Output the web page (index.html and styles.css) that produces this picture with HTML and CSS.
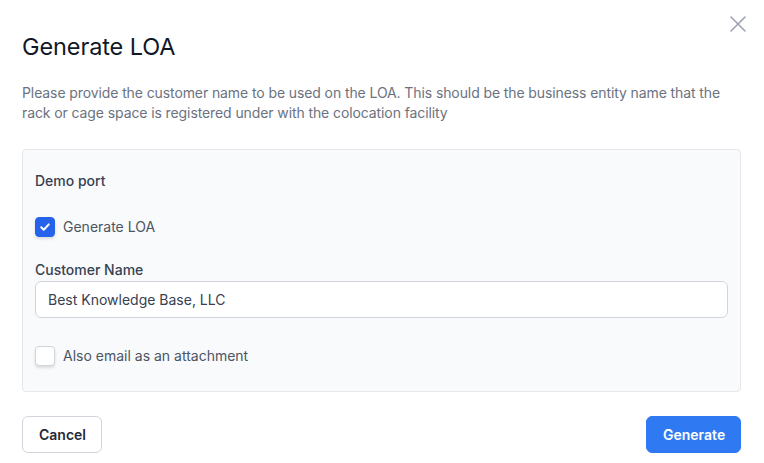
FILE: index.html
```html
<!DOCTYPE html>
<html>
<head>
<meta charset="utf-8">
<link rel="stylesheet" href="styles.css">
</head>
<body>
<div class="dialog">
  <button class="close" aria-label="Close">
    <svg width="16" height="16" viewBox="0 0 16 16"><path d="M1 1L15 15M15 1L1 15" stroke="#9ca3af" stroke-width="1.6" stroke-linecap="round"/></svg>
  </button>
  <h1 class="title">Generate LOA</h1>
  <p class="desc">Please provide the customer name to be used on the LOA. This should be the business entity name that the rack or cage space is registered under with the colocation facility</p>
  <div class="panel">
    <div class="port">Demo port</div>
    <label class="check-row first">
      <span class="box checked">
        <svg width="12" height="12" viewBox="0 0 12 12"><path d="M2.2 6.3L4.8 8.8L9.8 3.4" fill="none" stroke="#fff" stroke-width="2" stroke-linecap="round" stroke-linejoin="round"/></svg>
      </span>
      <span class="check-label">Generate LOA</span>
    </label>
    <div class="field-label">Customer Name</div>
    <div class="input">Best Knowledge Base, LLC</div>
    <label class="check-row second">
      <span class="box"></span>
      <span class="check-label">Also email as an attachment</span>
    </label>
  </div>
  <div class="footer">
    <button class="btn cancel">Cancel</button>
    <button class="btn primary">Generate</button>
  </div>
</div>
</body>
</html>
```
FILE: styles.css
```css
* { box-sizing: border-box; }
html, body { margin: 0; padding: 0; background: #fff; }
body { font-family: Inter, "Noto Sans", sans-serif; color: #374151; }
.dialog { position: relative; padding: 33px 23px 0 22px; width: 764px; height: 463px; }
.close { position: absolute; top: 16px; right: 18px; border: 0; background: none; padding: 0; width: 16px; height: 16px; }
.close svg { display: block; }
.title { margin: 0; font-size: 23.5px; line-height: 28px; font-weight: 400; color: #111827; letter-spacing: -0.1px; }
.desc { margin: 22px 0 0; padding-right: 20px; font-size: 14px; line-height: 20px; color: #6b7280; letter-spacing: -0.1px; }
.panel { margin-top: 26px; background: #f9fafb; border: 1px solid #e5e7eb; border-radius: 4px; padding: 21px 12px 25px; }
.port { font-size: 14px; line-height: 20px; font-weight: 500; color: #374151; }
.check-row { display: flex; align-items: center; gap: 8px; }
.check-row.first { margin-top: 26px; }
.check-row.second { margin-top: 28px; }
.box { width: 20px; height: 20px; border-radius: 4px; background: #fff; border: 1px solid #d1d5db; box-shadow: 0 2px 3px rgba(0,0,0,0.12); display: flex; align-items: center; justify-content: center; }
.box.checked { background: #2563eb; border-color: #2563eb; }
.box svg { display: block; }
.check-label { font-size: 14px; line-height: 20px; color: #4b5563; }
.field-label { margin-top: 23px; font-size: 14px; line-height: 20px; font-weight: 500; color: #374151; }
.input { margin-top: 1px; height: 37px; background: #fff; border: 1px solid #d1d5db; border-radius: 6px; padding: 0 12px; display: flex; align-items: center; font-size: 14px; color: #374151; }
.footer { margin-top: 24px; display: flex; justify-content: space-between; }
.btn { font-family: Inter, "Noto Sans", sans-serif; height: 37px; border-radius: 6px; font-size: 14px; font-weight: 600; padding: 0 16px; }
.cancel { width: 80px; background: #fff; border: 1px solid #d1d5db; color: #1f2937; }
.primary { width: 95px; background: #2f7af3; border: 1px solid #2f7af3; color: #fff; }
```
